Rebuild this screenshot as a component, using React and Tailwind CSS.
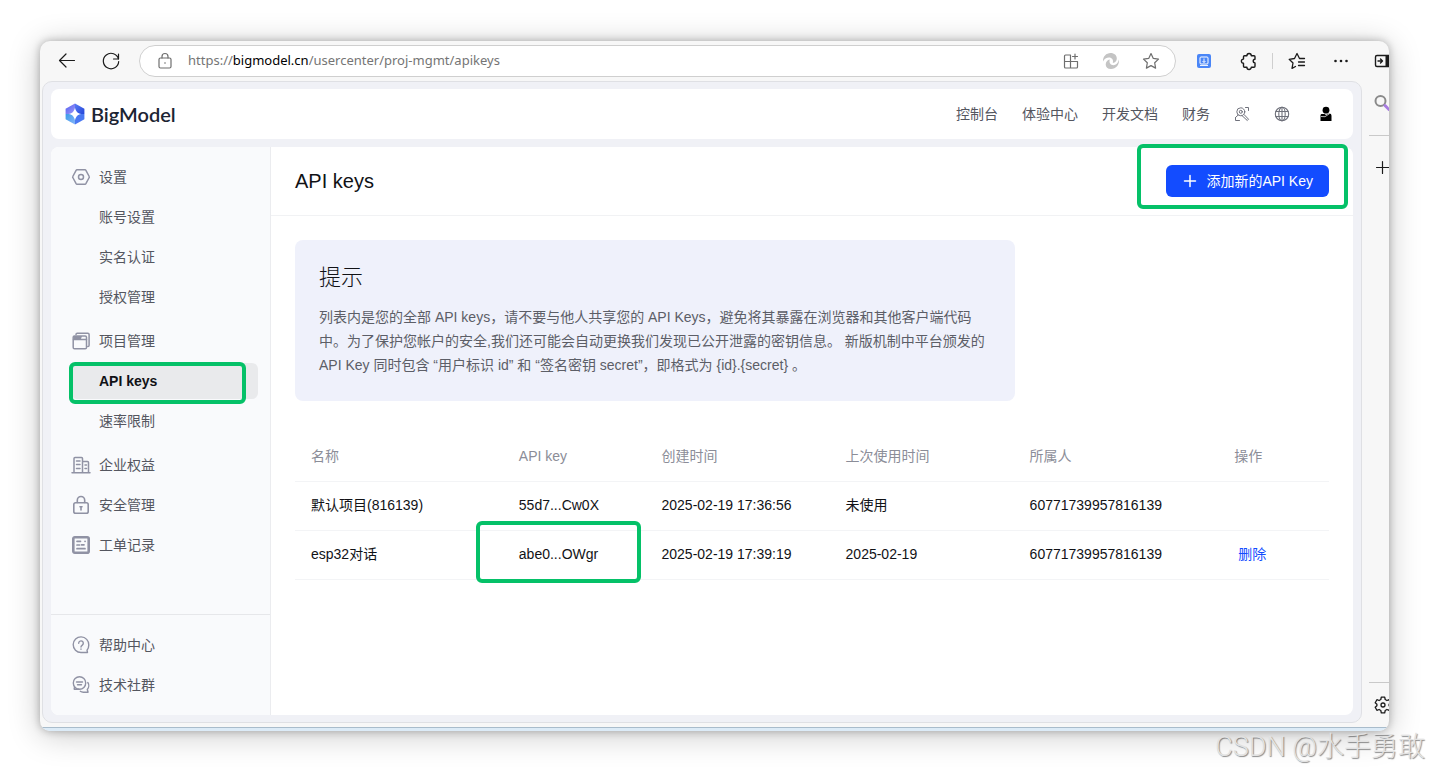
import React from "react";

const FONT = "font-['Liberation_Sans','Noto_Sans_CJK_SC',sans-serif]";

function Svg({ className = "h-5 w-5", box = 20, children, sw = 1.2 }) {
  return (
    <svg
      className={"shrink-0 " + className}
      viewBox={`0 0 ${box} ${box}`}
      fill="none"
      stroke="currentColor"
      strokeWidth={sw}
      strokeLinecap="round"
      strokeLinejoin="round"
      aria-hidden="true"
    >
      {children}
    </svg>
  );
}

/* ---------- browser chrome icons ---------- */

const BackIcon = () => (
  <Svg className="h-6 w-6" box={24}>
    <path d="M4.500 11.500H19.500M11 5l-6.500 6.500L11 18" />
  </Svg>
);

const ReloadIcon = () => (
  <Svg className="h-6 w-6" box={24}>
    <path d="M19.500 10.200A7.700 7.700 0 1 0 19.700 12.500M19.500 5v5h-5" />
  </Svg>
);

const PadlockIcon = () => (
  <Svg box={20}>
    <rect x="4" y="7" width="12" height="10" rx="1.500" />
    <path d="M7 7V5.500a3 3 0 0 1 6 0V7" />
    <circle cx="10" cy="12" r="0.800" fill="currentColor" stroke="none" />
  </Svg>
);

const AddAppIcon = () => (
  <Svg box={20}>
    <path d="M9.500 4H4.500a1 1 0 0 0-1 1v11a1 1 0 0 0 1 1h11a1 1 0 0 0 1-1v-5.500H3.500M9.500 4v13M14 3v5M11.500 5.500h5" />
  </Svg>
);

const SwirlIcon = () => (
  <Svg box={20} className="h-5 w-5 text-[#c4c4c4]" sw={1}>
    <path
      fill="currentColor"
      stroke="none"
      d="M2 10.500C1.800 5.500 5.200 2 9.600 2c3.700 0 6.200 2.400 6.200 5.400 0 2.400-1.500 4.200-4 4.600.9-2.900-.8-5.400-3.800-5.400-2.500 0-4.800 1.400-6 3.900z"
    />
    <path
      fill="currentColor"
      stroke="none"
      d="M18 8.500c.6 5-3 9.500-8 9.500-3.500 0-5.300-2-5.300-4.500 0-2.700 1.700-4.500 4.100-5-1 3.300.7 5.700 3.700 5.700 2.500 0 4.500-2 5.500-5.700z"
    />
  </Svg>
);

const StarIcon = () => (
  <Svg box={20}>
    <path d="M10 2.500l2.300 4.900 5.200.7-3.800 3.700.9 5.300L10 14.600l-4.600 2.500.9-5.300L2.500 8.100l5.200-.7z" />
  </Svg>
);

const ReaderIcon = () => (
  <svg className="h-6 w-6" viewBox="0 0 24 24" fill="none" aria-hidden="true">
    <rect x="5" y="5" width="14" height="14" rx="2" fill="#4a86f7" />
    <rect x="8" y="8" width="8" height="7" rx="1" stroke="#fff" />
    <path d="M12 9.500v4M10.500 12l1.500 1.500 1.500-1.500M8 16.500h8" stroke="#fff" strokeWidth="0.900" />
  </svg>
);

const PuzzleIcon = () => (
  <Svg className="h-6 w-6" box={24} sw={1.4}>
    <path d="M8.500 6.700h2.400a2.200 2.200 0 0 1 4.400 0h2.700a1 1 0 0 1 1 1v2.600a1.800 1.800 0 1 0 0 3.600v3.400a1 1 0 0 1-1 1h-2.700a2.200 2.200 0 0 1-4.400 0H8.500a1 1 0 0 1-1-1v-3a2.100 2.100 0 0 1 0-4.200V7.700a1 1 0 0 1 1-1z" />
  </Svg>
);

const FavoritesIcon = () => (
  <Svg className="h-6 w-6" box={24} sw={1.3}>
    <path d="M19.500 9.500h-5L12 4.500 9.500 9.500l-5.300.8 3.800 3.700-1 5.300 3.500-1.800M13.500 13h6M13.500 16.500h6" />
  </Svg>
);

const MoreIcon = () => (
  <Svg className="h-6 w-6" box={24}>
    <g fill="currentColor" stroke="none">
      <circle cx="6.500" cy="12" r="1.300" />
      <circle cx="12" cy="12" r="1.300" />
      <circle cx="17.500" cy="12" r="1.300" />
    </g>
  </Svg>
);

const PanelIcon = () => (
  <Svg className="h-4 w-4" box={16} sw={1.4}>
    <rect x="2.500" y="2.500" width="16" height="11" rx="1.500" />
    <path d="M12.500 2h4v12h-4z" fill="currentColor" stroke="none" />
    <path d="M5 8h4.500M7.500 6l2 2-2 2" />
  </Svg>
);

/* ---------- page icons ---------- */

const Logo = () => (
  <svg className="h-[22px] w-5 shrink-0" viewBox="0 0 20 22" aria-hidden="true">
    <defs>
      <linearGradient id="lg-a" x1="0" y1="0" x2="1" y2="1">
        <stop offset="0" stopColor="#4f5df0" />
        <stop offset="1" stopColor="#a09af8" />
      </linearGradient>
      <linearGradient id="lg-b" x1="0" y1="0" x2="1" y2="1">
        <stop offset="0" stopColor="#5a7df5" />
        <stop offset="1" stopColor="#2446d8" />
      </linearGradient>
      <linearGradient id="lg-c" x1="0" y1="0" x2="1" y2="1">
        <stop offset="0" stopColor="#3a9be8" />
        <stop offset="1" stopColor="#86b4fa" />
      </linearGradient>
    </defs>
    <path d="M10 .5L.6 5.800V11H10z" fill="url(#lg-a)" />
    <path d="M10 .5l9.400 5.300V11H10z" fill="url(#lg-b)" />
    <path d="M.6 11v5.200L10 21.500V11z" fill="url(#lg-c)" />
    <path d="M19.400 11v5.200L10 21.500V11z" fill="#4a78f2" />
    <path d="M10 4.500c.8 4 2.500 5.700 6.300 6.500-3.800.8-5.500 2.500-6.300 6.500-.8-4-2.500-5.700-6.300-6.500 3.800-.8 5.500-2.500 6.300-6.500z" fill="#fff" />
  </svg>
);

const KeyScanIcon = () => (
  <Svg className="h-4 w-4" box={16} sw={1}>
    <circle cx="6.800" cy="5.800" r="4" />
    <circle cx="6.800" cy="5.800" r="1.500" />
    <path d="M10 8.500l4.500 4.700-1.200 1.300L8 9.600M11.500 1.500h3v3M1.500 11.500v3h4M4.200 9L1.500 11.500" />
  </Svg>
);

const GlobeIcon = () => (
  <Svg className="h-4 w-4" box={16} sw={1.1}>
    <circle cx="8" cy="8" r="6.700" />
    <ellipse cx="8" cy="8" rx="3.200" ry="6.700" />
    <path d="M8 1.300v13.400M1.800 5.500h12.400M1.800 10.500h12.400" />
  </Svg>
);

const UserIcon = () => (
  <svg className="h-4 w-4" viewBox="0 0 16 16" aria-hidden="true">
    <circle cx="8" cy="4.200" r="3.400" fill="#000" />
    <path d="M2.500 15V9.500c0-1 .6-1.500 1.500-1.500h2.500L8 9l3-1.500c1.800 0 2.500.8 2.500 2.500V15z" fill="#000" />
    <path d="M3 10.500l4 .2 4.500-3" stroke="#fff" strokeWidth="0.700" fill="none" />
  </svg>
);

const SettingIcon = () => (
  <Svg sw={1.5}>
    <path d="M6 2.800h8a1 1 0 0 1 .9.500l3.300 6.200a1 1 0 0 1 0 1l-3.300 6.200a1 1 0 0 1-.9.500H6a1 1 0 0 1-.9-.5L1.800 10.500a1 1 0 0 1 0-1l3.300-6.200a1 1 0 0 1 .9-.5z" />
    <circle cx="10" cy="10" r="2.500" />
  </Svg>
);

const ProjectIcon = () => (
  <Svg sw={1.5}>
    <path d="M5 3.500a1.300 1.300 0 0 1 1.300-1.300h10.500a1.300 1.300 0 0 1 1.300 1.300v10.700a1.300 1.300 0 0 1-1.300 1.300" />
    <rect x="2.200" y="5" width="13.300" height="12.800" rx="1.300" />
    <path d="M2.500 8.500h13" />
    <path d="M3 5h8l-1 3H3z" fill="currentColor" stroke="none" />
  </Svg>
);

const BuildingIcon = () => (
  <Svg sw={1.5}>
    <path d="M1 17.800h18M3 17.800V3.500a1 1 0 0 1 1-1h6.500a1 1 0 0 1 1 1v14.300M11.500 6.500h5a1 1 0 0 1 1 1v10.300M5.500 6H9M5.500 9.500H9M5.500 13.500H9M14 10h1.500M14 13.500h1.500" />
  </Svg>
);

const LockIcon = () => (
  <Svg sw={1.6}>
    <rect x="2.800" y="7.800" width="14.400" height="10.400" rx="1.800" />
    <path d="M6.300 7.500V5.200a3.700 3.700 0 0 1 7.400 0v2.300M10 11.800v3.200M9 11.700h2" />
  </Svg>
);

const TicketIcon = () => (
  <Svg sw={2.6}>
    <rect x="2.300" y="2.300" width="15.400" height="15.400" rx="1.500" />
    <path d="M6 6.300h3.500M14 6.300h.100M6 10h2.500M10.500 9.800h2.500M6 13.700h8" strokeWidth="1.700" />
  </Svg>
);

const HelpIcon = () => (
  <Svg sw={1.4}>
    <path d="M16.500 17.500H10A7.800 7.800 0 1 1 17.800 10c0 2.300-.8 4-1.800 5.200z" />
    <path d="M7.700 8.200a2.300 2.300 0 1 1 3.600 1.900c-.9.600-1.300 1-1.300 1.900M10 14v.200" />
  </Svg>
);

const ChatIcon = () => (
  <Svg sw={1.4}>
    <circle cx="8.500" cy="8" r="6.200" />
    <path d="M3.500 12l-.3 2.200H8M5.500 7h6M6.500 9.800h4" />
    <path d="M16.800 7.500c1.300 1.800 1.300 5-.5 7l.8 2.700h-4.800c-1.300 0-2.200-.3-3-.9" />
  </Svg>
);

/* ---------- page data ---------- */

const NAV_GROUPS = [
  { label: "设置", Icon: SettingIcon, items: ["账号设置", "实名认证", "授权管理"] },
  { label: "项目管理", Icon: ProjectIcon, items: ["API keys", "速率限制"] },
];

const NAV_SINGLE = [
  { label: "企业权益", Icon: BuildingIcon },
  { label: "安全管理", Icon: LockIcon },
  { label: "工单记录", Icon: TicketIcon },
];

const NAV_FOOTER = [
  { label: "帮助中心", Icon: HelpIcon },
  { label: "技术社群", Icon: ChatIcon },
];

const ROWS = [
  { name: "默认项目(816139)", key: "55d7...Cw0X", created: "2025-02-19 17:36:56", used: "未使用", owner: "60771739957816139" },
  { name: "esp32对话", key: "abe0...OWgr", created: "2025-02-19 17:39:19", used: "2025-02-19", owner: "60771739957816139", marked: true },
];

const TIP =
  "列表内是您的全部 API keys，请不要与他人共享您的 API Keys，避免将其暴露在浏览器和其他客户端代码中。为了保护您帐户的安全,我们还可能会自动更换我们发现已公开泄露的密钥信息。 新版机制中平台颁发的 API Key 同时包含 “用户标识 id” 和 “签名密钥 secret”，即格式为 {id}.{secret} 。";

/* ---------- pieces ---------- */

function IconButton({ label, className = "h-6 w-6", children }) {
  return (
    <button type="button" aria-label={label} className={"flex shrink-0 items-center justify-center " + className}>
      {children}
    </button>
  );
}

function Marker({ className }) {
  return <span aria-hidden="true" className={"pointer-events-none absolute rounded-md border-4 border-[#05c168] " + className} />;
}

function NavItem({ label, Icon }) {
  return (
    <a href="#" className="flex h-9 items-center gap-2 pl-2">
      <span className="flex w-5 text-[#9092a4]">
        <Icon />
      </span>
      {label}
    </a>
  );
}

function SubItem({ label }) {
  if (label === "API keys") {
    return (
      <a href="#" aria-current="page" className="relative ml-2 flex h-9 items-center rounded-md bg-[#e9eaec] pl-7 font-bold text-[#111216]">
        {label}
        <Marker className="-bottom-[5px] -left-0.5 -top-px right-3" />
      </a>
    );
  }
  return (
    <a href="#" className="flex h-9 items-center pl-9">
      {label}
    </a>
  );
}

function Toolbar() {
  return (
    <div className="flex h-10 shrink-0 items-center pl-[15px] text-[#1b1b1b]">
      <div className="flex gap-5">
        <IconButton label="后退"><BackIcon /></IconButton>
        <IconButton label="刷新"><ReloadIcon /></IconButton>
      </div>
      <div className="ml-4 flex h-8 min-w-0 flex-1 items-center rounded-full border border-[#cfcfcf] bg-white pl-[15px] pr-[14px] text-[#6e6e6e]">
        <PadlockIcon />
        <a href="#" className="ml-[13px] min-w-0 flex-1 truncate font-['Noto_Sans',sans-serif] text-[13px] text-[#757575]">
          https://<span className="text-black">bigmodel.cn</span>/usercenter/proj-mgmt/apikeys
        </a>
        <div className="flex gap-5">
          <IconButton label="应用" className="h-5 w-5"><AddAppIcon /></IconButton>
          <IconButton label="同步" className="h-5 w-5"><SwirlIcon /></IconButton>
          <IconButton label="收藏" className="h-5 w-5"><StarIcon /></IconButton>
        </div>
      </div>
      <div className="ml-4 flex shrink-0 items-center">
        <div className="flex gap-5">
          <IconButton label="阅读"><ReaderIcon /></IconButton>
          <IconButton label="扩展"><PuzzleIcon /></IconButton>
        </div>
        <span className="mx-3 h-4 w-px bg-[#cfcfcf]" />
        <div className="flex items-center gap-5">
          <IconButton label="收藏夹"><FavoritesIcon /></IconButton>
          <IconButton label="更多"><MoreIcon /></IconButton>
          <IconButton label="侧栏" className="h-4 w-4"><PanelIcon /></IconButton>
        </div>
      </div>
    </div>
  );
}

function EdgeRail() {
  return (
    <aside className="flex w-[27px] shrink-0 flex-col overflow-hidden pl-[7px] text-[#1b1b1b]">
      <button type="button" aria-label="搜索" className="flex h-[55px] w-6 items-center border-b border-[#c9c9c9] pb-2.5 pl-1">
        <svg className="h-[18px] w-[18px] shrink-0" viewBox="0 0 18 18" fill="none" aria-hidden="true">
          <circle cx="7.500" cy="7" r="5" stroke="#8a8a8a" strokeWidth="2" />
          <path d="M12 11.500l4 4" stroke="#a77be0" strokeWidth="3" strokeLinecap="round" />
        </svg>
      </button>
      <button type="button" aria-label="添加" className="flex h-16 w-6 items-center pl-1">
        <Svg box={20}><path d="M3.500 9.500h13M9.500 3.500v12" /></Svg>
      </button>
      <button type="button" aria-label="设置" className="mt-auto flex h-[41px] w-6 items-center border-t border-[#c9c9c9] pl-1 pt-1">
        <Svg box={20} sw={1.3}>
          <circle cx="10" cy="10" r="2" />
          <path d="M8.300 2.200h3.400l.5 2.300 1.700 1 2.200-.8 1.700 3-1.700 1.500v1.600l1.700 1.500-1.700 3-2.200-.8-1.700 1-.5 2.300H8.300l-.5-2.300-1.700-1-2.200.8-1.700-3 1.700-1.500V9.200L2.200 7.700l1.700-3 2.200.8 1.700-1z" />
        </Svg>
      </button>
    </aside>
  );
}

function SiteHeader() {
  return (
    <header className="flex h-[50px] shrink-0 items-center justify-between rounded-lg bg-white pl-[14px] pr-[15px]">
      <a href="#" className="flex items-center gap-1.5 font-['Lato',sans-serif] text-[20px] font-semibold leading-6 text-[#1c2433]">
        <Logo />
        BigModel
      </a>
      <nav className="flex items-center gap-6 text-sm text-[#54565f]">
        <a href="#">控制台</a>
        <a href="#">体验中心</a>
        <a href="#">开发文档</a>
        <a href="#">财务</a>
        <IconButton label="密钥" className="h-4 w-4 text-[#6f717b]"><KeyScanIcon /></IconButton>
        <IconButton label="语言" className="h-4 w-4 text-[#6f717b]"><GlobeIcon /></IconButton>
        <IconButton label="用户"><UserIcon /></IconButton>
      </nav>
    </header>
  );
}

function Sidebar() {
  return (
    <nav className="flex w-[220px] shrink-0 flex-col rounded-l-lg border-r border-[#ebecef] bg-[#f9fafc] pt-3 text-sm text-[#54565f]">
      <div className="flex flex-col gap-2 px-3">
        {NAV_GROUPS.map((g) => (
          <div key={g.label} className="flex flex-col gap-1">
            <NavItem label={g.label} Icon={g.Icon} />
            {g.items.map((label) => (
              <SubItem key={label} label={label} />
            ))}
          </div>
        ))}
        <div className="flex flex-col gap-1">
          {NAV_SINGLE.map((n) => (
            <NavItem key={n.label} {...n} />
          ))}
        </div>
      </div>
      <div className="mt-auto flex flex-col gap-1 border-t border-[#e6e7ea] p-3">
        {NAV_FOOTER.map((n) => (
          <NavItem key={n.label} {...n} />
        ))}
      </div>
    </nav>
  );
}

function KeyTable() {
  const th = "px-4 text-left font-normal";
  const td = "px-4 pb-0.5";
  return (
    <table className="mt-[31px] w-full table-fixed border-collapse text-sm text-[#111216]">
      <colgroup>
        <col className="w-[20.1%]" />
        <col className="w-[13.8%]" />
        <col className="w-[17.8%]" />
        <col className="w-[17.8%]" />
        <col className="w-[19.8%]" />
        <col />
      </colgroup>
      <thead>
        <tr className="h-[49px] border-b border-[#f3f4f6] text-[#8b8d98]">
          <th className={th}>名称</th>
          <th className={th}>API key</th>
          <th className={th}>创建时间</th>
          <th className={th}>上次使用时间</th>
          <th className={th}>所属人</th>
          <th className={th}>操作</th>
        </tr>
      </thead>
      <tbody>
        {ROWS.map((r) => (
          <tr key={r.name} className="h-[49px] border-b border-[#f3f4f6]">
            <td className={td}>{r.name}</td>
            <td className={td}>
              {r.marked ? (
                <span className="relative block">
                  {r.key}
                  <Marker className="-left-[43px] -right-[11px] -top-[23px] h-[62px]" />
                </span>
              ) : (
                r.key
              )}
            </td>
            <td className={td}>{r.created}</td>
            <td className={td}>{r.used}</td>
            <td className={td}>{r.owner}</td>
            <td className={td}>
              {r.marked && (
                <button type="button" className="px-1 text-[#134cff]">删除</button>
              )}
            </td>
          </tr>
        ))}
      </tbody>
    </table>
  );
}

export default function App() {
  return (
    <div className={"relative flex min-h-screen flex-col bg-white p-10 pt-[41px] " + FONT}>
      <div className="flex flex-1 flex-col overflow-hidden rounded-[10px] bg-[#f7f7f7] shadow-[0_0_8px_rgba(0,0,0,0.28),0_4px_32px_rgba(0,0,0,0.22)]">
        <Toolbar />
        <div className="flex flex-1">
          <div className="ml-0.5 flex min-w-0 flex-1 flex-col gap-2 rounded-[10px] border border-[#dfe0e4] bg-[#f0f1f6] px-2 py-[7px]">
            <SiteHeader />
            <div className="flex flex-1 rounded-lg bg-white">
              <Sidebar />
              <main className="min-w-0 flex-1">
                <div className="flex h-[69px] items-center justify-between border-b border-[#f1f2f4] px-6">
                  <h1 className="text-xl text-[#111216]">API keys</h1>
                  <div className="relative">
                    <button type="button" className="flex h-8 items-center gap-2 rounded-md bg-[#134cff] px-4 text-sm text-white">
                      <Svg className="h-4 w-4" box={16} sw={1.5}>
                        <path d="M8 2.500v11M2.500 8h11" />
                      </Svg>
                      添加新的API Key
                    </button>
                    <Marker className="-bottom-3 -left-[29px] -right-[19px] -top-[21px]" />
                  </div>
                </div>
                <div className="px-6 pt-6">
                  <section className="max-w-[720px] rounded-lg bg-[#eff1fb] p-6">
                    <h2 className="mb-[13px] text-[22px] font-light leading-7 text-[#111216]">提示</h2>
                    <p className="text-sm leading-6 text-[#5c5e67]">{TIP}</p>
                  </section>
                  <KeyTable />
                </div>
              </main>
            </div>
          </div>
          <EdgeRail />
        </div>
        <div className="mt-1 h-1 shrink-0 border-t border-[#a9bccb] bg-[#dcebf7]" />
      </div>
      <div className="absolute bottom-1 right-1 font-['Roboto','Noto_Sans_CJK_SC',sans-serif] text-[27px] font-light text-[#e2e2e2] [text-shadow:1px_1px_1px_rgba(0,0,0,0.45)]">
        CSDN @水手勇敢
      </div>
    </div>
  );
}
